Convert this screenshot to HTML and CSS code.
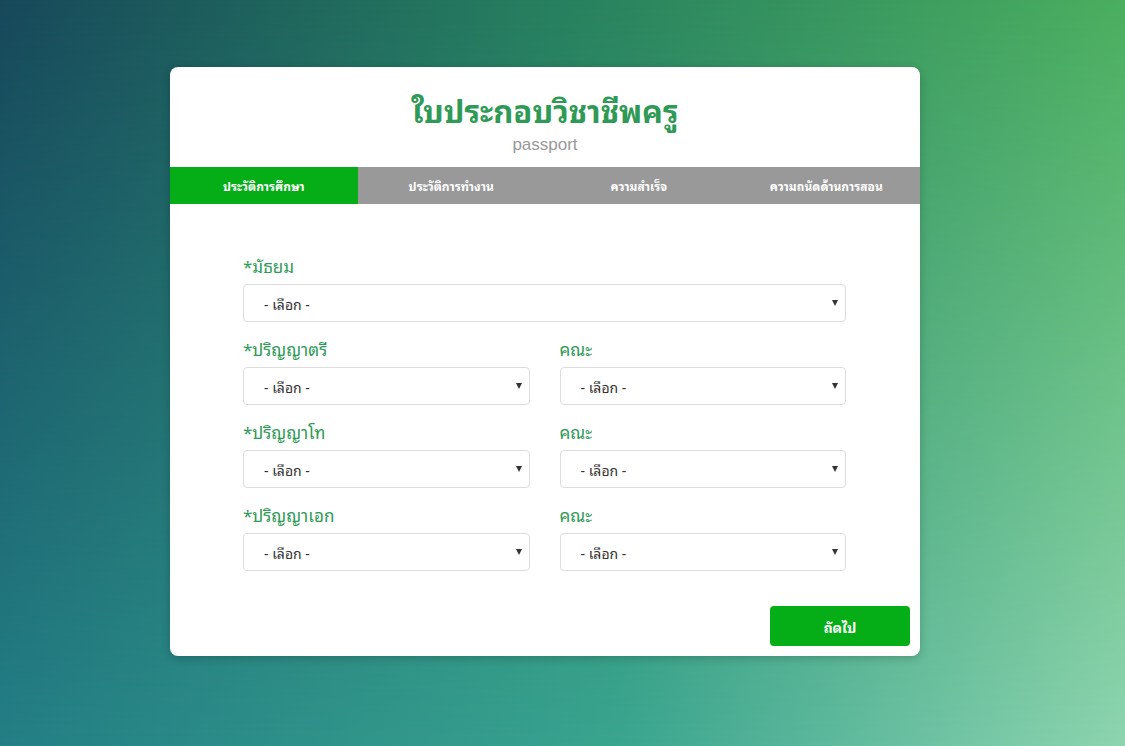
FILE: index.html
```html
<!DOCTYPE html>
<html lang="th">
<head>
<meta charset="utf-8">
<title>ใบประกอบวิชาชีพครู</title>
<link rel="stylesheet" href="styles.css">
</head>
<body>
<div class="card">
  <header class="head">
    <h1 class="title">ใบประกอบวิชาชีพครู</h1>
    <p class="sub">passport</p>
  </header>
  <nav class="tabs">
    <div class="tab active">ประวัติการศึกษา</div>
    <div class="tab">ประวัติการทำงาน</div>
    <div class="tab">ความสำเร็จ</div>
    <div class="tab">ความถนัดด้านการสอน</div>
  </nav>
  <form class="form">
    <div class="group">
      <label class="lbl">*มัธยม</label>
      <div class="sel"><select><option>- เลือก -</option></select></div>
    </div>
    <div class="row">
      <div class="group">
        <label class="lbl">*ปริญญาตรี</label>
        <div class="sel"><select><option>- เลือก -</option></select></div>
      </div>
      <div class="group">
        <label class="lbl">คณะ</label>
        <div class="sel"><select><option>- เลือก -</option></select></div>
      </div>
    </div>
    <div class="row">
      <div class="group">
        <label class="lbl">*ปริญญาโท</label>
        <div class="sel"><select><option>- เลือก -</option></select></div>
      </div>
      <div class="group">
        <label class="lbl">คณะ</label>
        <div class="sel"><select><option>- เลือก -</option></select></div>
      </div>
    </div>
    <div class="row">
      <div class="group">
        <label class="lbl">*ปริญญาเอก</label>
        <div class="sel"><select><option>- เลือก -</option></select></div>
      </div>
      <div class="group">
        <label class="lbl">คณะ</label>
        <div class="sel"><select><option>- เลือก -</option></select></div>
      </div>
    </div>
  </form>
  <div class="foot">
    <button class="next" type="button">ถัดไป</button>
  </div>
</div>
</body>
</html>
```

FILE: styles.css
```css
html, body {
  margin: 0;
  height: 100%;
}
body {
  position: relative;
  overflow: hidden;
  font-family: "Noto Sans Thai Looped", Loma, Garuda, "Noto Sans Thai", "Liberation Sans", "Noto Sans", sans-serif;
  background: linear-gradient(to right, #237f85 0%, #3aa58f 55%, #8ed5b0 100%);
}
body::before {
  content: "";
  position: absolute;
  inset: 0;
  background: linear-gradient(to right, #17485a 0%, #27805e 50%, #4aae5e 100%);
  -webkit-mask-image: linear-gradient(to bottom, #000 0%, rgba(0,0,0,0.55) 45%, transparent 100%);
  mask-image: linear-gradient(to bottom, #000 0%, rgba(0,0,0,0.55) 45%, transparent 100%);
}
.card {
  position: relative;
  width: 750px;
  margin: 67px 0 0 170px;
  background: #fff;
  border-radius: 8px;
  box-shadow: 0 2px 10px rgba(0,0,0,0.2);
  overflow: hidden;
  padding-bottom: 10px;
}
.head {
  text-align: center;
  padding-top: 24px;
  padding-bottom: 12px;
}
.title {
  margin: 0;
  font-size: 31px;
  line-height: 36px;
  font-weight: 700;
  color: #2e9a56;
}
.sub {
  margin: 8px 0 0;
  font-family: "Liberation Sans", Arial, sans-serif;
  font-size: 17px;
  line-height: 20px;
  color: #999;
}
.tabs {
  display: grid;
  grid-template-columns: repeat(4, 1fr);
  background: #999;
  height: 37px;
}
.tab {
  display: flex;
  align-items: center;
  justify-content: center;
  color: #fff;
  font-size: 12px;
  font-weight: 700;
}
.tab.active {
  background: #05ad16;
}
.form {
  padding: 50px 74px 0 73px;
}
.row {
  display: grid;
  grid-template-columns: 1fr 1fr;
  column-gap: 30px;
}
.group {
  margin-bottom: 15px;
}
.lbl {
  display: block;
  font-size: 17px;
  line-height: 24px;
  color: #2e9a56;
  margin-bottom: 6px;
}
.sel {
  position: relative;
}
.sel::after {
  content: "";
  position: absolute;
  right: 8px;
  top: 16px;
  border-left: 3px solid transparent;
  border-right: 3px solid transparent;
  border-top: 6px solid #333;
}
.sel select {
  display: block;
  width: 100%;
  height: 38px;
  -webkit-appearance: none;
  appearance: none;
  background: #fff;
  border: 1px solid #ddd;
  border-radius: 4px;
  padding: 0 20px;
  font-family: inherit;
  font-size: 14px;
  color: #333;
  outline: none;
}
.foot {
  display: flex;
  justify-content: flex-end;
  padding: 20px 10px 0 0;
}
.next {
  width: 140px;
  height: 40px;
  border: 0;
  border-radius: 4px;
  background: #05ad16;
  color: #fff;
  font-family: inherit;
  font-size: 14px;
  font-weight: 700;
}
```
